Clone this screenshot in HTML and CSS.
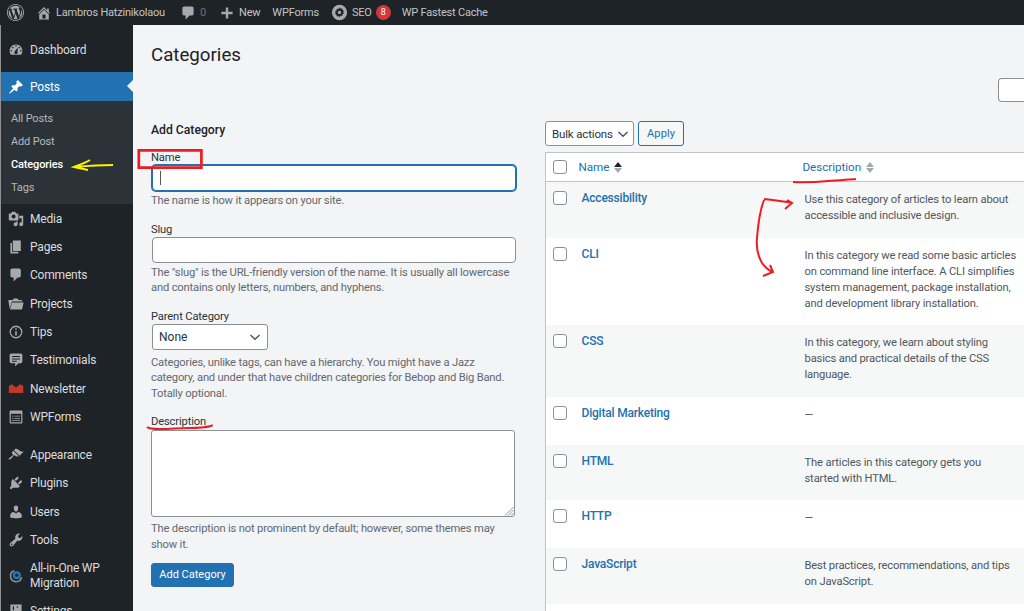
FILE: index.html
```html
<!DOCTYPE html>
<html lang="en">
<head>
    <meta charset="UTF-8">
    <meta name="viewport" content="width=device-width, initial-scale=1.0">
    <title>Categories</title>
    <link rel="stylesheet" href="styles.css">
</head>
<body>
    <div class="adminbar">
        <svg class="bar-logo" viewBox="0 0 20 20"><path d="M20 10c0-5.52-4.48-10-10-10S0 4.48 0 10s4.48 10 10 10 10-4.48 10-10zM10 1.01c4.96 0 8.99 4.02 8.99 8.99s-4.03 8.99-8.99 8.99S1.01 14.96 1.01 10 5.04 1.01 10 1.01zM8.01 14.82L4.96 6.61c.49-.03 1.05-.08 1.05-.08.43-.05.38-1.01-.06-.99 0 0-1.29.1-2.13.1-.15 0-.33 0-.52-.01 1.44-2.17 3.9-3.6 6.7-3.6 2.09 0 3.99.79 5.41 2.09-.6-.08-1.45.35-1.45 1.42 0 .66.38 1.22.79 1.88.31.54.5 1.22.5 2.21 0 1.34-1.27 4.48-1.27 4.48l-2.71-7.5c.48-.03.75-.16.75-.16.43-.05.38-1.1-.05-1.08 0 0-1.3.11-2.14.11-.78 0-2.11-.11-2.11-.11-.43-.02-.48 1.06-.05 1.08l.84.08 1.12 3.04zm6.02 2.15L16.64 10s.67-1.69.39-3.81c.63 1.14.94 2.42.94 3.81 0 2.96-1.56 5.58-3.94 6.97zM2.68 6.77L6.5 17.25c-2.67-1.3-4.47-4.08-4.47-7.25 0-1.16.2-2.23.65-3.23zm7.45 4.53l2.29 6.25c-.75.27-1.57.42-2.42.42-.72 0-1.41-.11-2.06-.3z"/></svg>
        <svg class="bar-icon bar-home" viewBox="0 0 20 20"><path d="M16 8.5l1.53 1.53-1.06 1.06L10 4.62l-6.47 6.47-1.06-1.06L10 2.5l4 4v-2h2v4zm-6-2.46l6 5.99V18H4v-5.97zM12 17v-5H8v5h4z"/></svg>
        <span class="bar-text bar-site">Lambros Hatzinikolaou</span>
        <svg class="bar-icon bar-comment" viewBox="0 0 20 20"><path d="M5 2h10c1.1 0 2 .9 2 2v7c0 1.1-.9 2-2 2h-3l-5 5v-5H5c-1.1 0-2-.9-2-2V4c0-1.1.9-2 2-2z"/></svg>
        <span class="bar-text bar-count">0</span>
        <svg class="bar-icon bar-plus" viewBox="0 0 20 20"><path d="M17 8.500v3h-5.500V17h-3v-5.500H3v-3h5.500V3h3v5.500z"/></svg>
        <span class="bar-text bar-new">New</span>
        <span class="bar-text bar-forms">WPForms</span>
        <svg class="bar-seo" viewBox="0 0 20 20"><path fill-rule="evenodd" d="M10 1a9 9 0 1 0 0 18 9 9 0 0 0 0-18zm0 3l1.200 1.500 1.900-.4.4 1.900 1.700.9-.8 1.700.8 1.700-1.700.9-.4 1.900-1.900-.4L10 15.700l-1.200-1.500-1.900.4-.4-1.900-1.700-.9.8-1.700-.8-1.700 1.700-.9.4-1.900 1.900.4z"/><circle cx="10" cy="9.900" r="2"/></svg>
        <span class="bar-text bar-seotext">SEO</span>
        <span class="bar-badge">8</span>
        <span class="bar-text bar-cache">WP Fastest Cache</span>
    </div>

    <div class="wrap">
        <nav class="sidebar">
            <a class="menu-item menu-first"><svg viewBox="0 0 20 20"><path d="M3.76 16h12.48c1.1-1.37 1.76-3.11 1.76-5 0-4.42-3.58-8-8-8s-8 3.58-8 8c0 1.89.66 3.63 1.76 5zM10 4c.55 0 1 .45 1 1s-.45 1-1 1-1-.45-1-1 .45-1 1-1zM6 6c.55 0 1 .45 1 1s-.45 1-1 1-1-.45-1-1 .45-1 1-1zm8 0c.55 0 1 .45 1 1s-.45 1-1 1-1-.45-1-1 .45-1 1-1zm-5.370 5.550L12 7v6c0 1.100-.9 2-2 2s-2-.9-2-2c0-.57.24-1.080.63-1.450zM4 10c.55 0 1 .45 1 1s-.45 1-1 1-1-.45-1-1 .45-1 1-1zm12 0c.55 0 1 .45 1 1s-.45 1-1 1-1-.45-1-1 .45-1 1-1z"/></svg>Dashboard</a>
            <a class="menu-item menu-current"><svg viewBox="0 0 20 20"><path d="M10.440 3.020l1.820-1.820 6.360 6.350-1.830 1.820c-1.050-.68-2.480-.57-3.410.36l-.75.75c-.92.93-1.040 2.350-.35 3.410l-1.830 1.820-2.410-2.410-2.800 2.790c-.42.42-3.380 2.710-3.800 2.290s1.860-3.390 2.280-3.810l2.790-2.790L4.100 9.360l1.830-1.820c1.050.69 2.480.57 3.400-.36l.75-.75c.93-.92 1.050-2.350.36-3.410z"/></svg>Posts</a>
            <div class="submenu">
                <a>All Posts</a>
                <a>Add Post</a>
                <a class="sub-current">Categories</a>
                <a>Tags</a>
            </div>
            <a class="menu-item"><svg viewBox="0 0 20 20"><path d="M13 11V4c0-.55-.45-1-1-1h-1.670L9 1H5L3.670 3H2c-.55 0-1 .45-1 1v7c0 .55.45 1 1 1h10c.55 0 1-.45 1-1zM7 4.500c1.380 0 2.500 1.120 2.500 2.500S8.380 9.500 7 9.500 4.500 8.380 4.500 7 5.620 4.500 7 4.500zM14 6h5v10.500c0 1.380-1.120 2.500-2.500 2.500S14 17.880 14 16.500s1.120-2.500 2.500-2.500c.17 0 .34.02.5.05V9h-3V6zm-4 8.050V13h2v3.500c0 1.380-1.120 2.500-2.500 2.500S7 17.880 7 16.500 8.120 14 9.500 14c.17 0 .34.02.5.05z"/></svg>Media</a>
            <a class="menu-item"><svg viewBox="0 0 20 20"><path d="M6 15V2h10v13H6zm-1 1h8v2H3V5h2v11z"/></svg>Pages</a>
            <a class="menu-item"><svg viewBox="0 0 20 20"><path d="M5 2h9c1.100 0 2 .9 2 2v7c0 1.100-.9 2-2 2h-2l-5 5v-5H5c-1.100 0-2-.9-2-2V4c0-1.100.9-2 2-2z"/></svg>Comments</a>
            <a class="menu-item"><svg viewBox="0 0 20 20"><path d="M1 5h5l1-2h5l1 2h4l1 2H5L2 16 .5 6c0-.6.2-1 .5-1zm4 3h14.500L17.500 17H2.500z"/></svg>Projects</a>
            <a class="menu-item"><svg viewBox="0 0 20 20"><path fill-rule="evenodd" d="M10 2a8 8 0 1 1 0 16 8 8 0 0 1 0-16zm0 1.600a6.400 6.400 0 1 0 0 12.800 6.400 6.400 0 0 0 0-12.800zM9 5.500h2v2H9zm0 3.500h2v5.500H9z"/></svg>Tips</a>
            <a class="menu-item"><svg viewBox="0 0 20 20"><path fill-rule="evenodd" d="M4 2h12c1.100 0 2 .9 2 2v8c0 1.100-.9 2-2 2h-3l-4 4v-4H4c-1.100 0-2-.9-2-2V4c0-1.100.9-2 2-2zm1 3v1.300h10V5zm0 3v1.300h10V8zm0 3v1.300h6V11z"/></svg>Testimonials</a>
            <a class="menu-item"><svg viewBox="0 0 20 20"><path class="icon-red" d="M1 6l4-2 5 4 5-4 4 2v9H1z"/></svg>Newsletter</a>
            <a class="menu-item menu-sep"><svg viewBox="0 0 20 20"><path fill-rule="evenodd" d="M3 2h14c.6 0 1 .4 1 1v14c0 .6-.4 1-1 1H3c-.6 0-1-.4-1-1V3c0-.6.4-1 1-1zm.5 4v10.500h13V6zM5 8.500h2v1H5zm3 0h7v1H8zm-3 3h2v1H5zm3 0h7v1H8zm-3 2.500h10v1H5z"/></svg>WPForms</a>
            <a class="menu-item"><svg viewBox="0 0 20 20"><path d="M14.480 11.060L7.410 3.990l1.500-1.500c.5-.56 2.300-.47 3.510.32 1.210.8 1.430 1.280 2.910 2.100 1.180.64 2.450 1.260 4.450.85zm-.71.71L6.700 4.700 4.930 6.470c-.39.39-.39 1.020 0 1.410l1.060 1.060c.39.39.39 1.030 0 1.420-.6.6-1.430 1.110-2.210 1.690-.35.26-.7.53-1.010.84C1.430 13.230.49 15 1.060 15.570c.57.57 2.340-.37 3.690-1.720.31-.31.58-.66.84-1.010.58-.78 1.090-1.610 1.690-2.210.39-.39 1.030-.39 1.420 0l1.060 1.060c.39.39 1.020.39 1.410 0z"/></svg>Appearance</a>
            <a class="menu-item"><svg viewBox="0 0 20 20"><path d="M13.110 4.360L9.870 7.600 8 5.730l3.240-3.240c.35-.34 1.050-.2 1.560.32.52.51.66 1.210.31 1.550zm-8 1.770l.91-1.120 9.010 9.010-1.190.84c-.71.71-2.630 1.160-3.820 1.160H6.140L4.900 17.260c-.59.59-1.540.59-2.120 0-.59-.58-.59-1.530 0-2.120l1.240-1.240v-3.880c0-1.130.4-3.190 1.090-3.890zm7.260 3.970l3.240-3.240c.34-.35 1.040-.21 1.550.31.52.51.66 1.210.31 1.550l-3.240 3.250z"/></svg>Plugins</a>
            <a class="menu-item"><svg viewBox="0 0 20 20"><path d="M10 9.250c-2.270 0-2.730-3.440-2.730-3.440C7 4.020 7.820 2 9.970 2c2.160 0 2.980 2.020 2.710 3.810 0 0-.41 3.440-2.680 3.440zm0 2.570L12.720 10c2.390 0 4.520 2.330 4.520 4.530v2.490s-3.650 1.130-7.240 1.130c-3.650 0-7.240-1.130-7.240-1.130v-2.490c0-2.250 1.940-4.480 4.470-4.480z"/></svg>Users</a>
            <a class="menu-item"><svg viewBox="0 0 20 20"><path d="M16.680 9.770c-1.340 1.340-3.300 1.670-4.950.99l-5.410 6.520c-.99.99-2.590.99-3.580 0s-.99-2.590 0-3.570l6.520-5.420c-.68-1.650-.35-3.610.99-4.950 1.280-1.280 3.120-1.620 4.720-1.060l-2.890 2.890 2.820 2.820 2.860-2.870c.53 1.580.18 3.390-1.080 4.650zM3.810 16.210c.4.39 1.040.39 1.430 0 .4-.4.4-1.040 0-1.430-.39-.4-1.030-.4-1.430 0-.39.39-.39 1.030 0 1.430z"/></svg>Tools</a>
            <a class="menu-item menu-tall"><svg viewBox="0 0 20 20"><path fill="none" stroke="#8c8f94" stroke-width="2" d="M8 3.500a7 7 0 1 0 9 8"/><circle class="icon-blue" cx="11" cy="9" r="5"/><circle cx="11" cy="9" r="2" fill="#1d2327"/></svg>All-in-One WP Migration</a>
            <a class="menu-item"><svg viewBox="0 0 20 20"><path d="M3 2h14v16H3zm3 2v5h1.500V4zm5 0v2h1.500V4z"/></svg>Settings</a>
        </nav>

        <main class="content">
            <h1>Categories</h1>
            <div class="search-row"><div class="search-box"></div></div>
            <div class="columns">
                <form class="col-form">
                    <h2>Add Category</h2>
                    <label>Name</label>
                    <div class="input input-focus"><span class="caret"></span></div>
                    <p class="help help-name">The name is how it appears on your site.</p>
                    <label>Slug</label>
                    <div class="input"></div>
                    <p class="help help-slug">The "slug" is the URL-friendly version of the name. It is usually all lowercase and contains only letters, numbers, and hyphens.</p>
                    <label>Parent Category</label>
                    <div class="select select-parent">None<svg viewBox="0 0 12 8"><path d="M1.500 2 6 6.200 10.500 2"/></svg></div>
                    <p class="help help-parent">Categories, unlike tags, can have a hierarchy. You might have a Jazz category, and under that have children categories for Bebop and Big Band. Totally optional.</p>
                    <label>Description</label>
                    <div class="textarea"><svg viewBox="0 0 10 10"><path d="M9.500 1 1 9.500M9.500 4 4 9.500M9.500 7 7 9.500"/></svg></div>
                    <p class="help help-desc">The description is not prominent by default; however, some themes may show it.</p>
                    <button type="button" class="btn-primary">Add Category</button>
                </form>

                <div class="col-table">
                    <div class="tablenav">
                        <div class="select select-bulk">Bulk actions<svg viewBox="0 0 12 8"><path d="M1.500 2 6 6.200 10.500 2"/></svg></div>
                        <button type="button" class="btn-apply">Apply</button>
                    </div>
                    <table>
                        <thead>
                            <tr>
                                <th class="check"><span class="box"></span></th>
                                <th class="th-name">Name<span class="sort"><i class="up dark"></i><i class="down"></i></span></th>
                                <th class="th-desc">Description<span class="sort"><i class="up"></i><i class="down"></i></span></th>
                            </tr>
                        </thead>
                        <tbody>
                            <tr class="alt">
                                <td class="check"><span class="box"></span></td>
                                <td class="name">Accessibility</td>
                                <td class="desc">Use this category of articles to learn about accessible and inclusive design.</td>
                            </tr>
                            <tr>
                                <td class="check"><span class="box"></span></td>
                                <td class="name">CLI</td>
                                <td class="desc">In this category we read some basic articles on command line interface. A CLI simplifies system management, package installation, and development library installation.</td>
                            </tr>
                            <tr class="alt">
                                <td class="check"><span class="box"></span></td>
                                <td class="name">CSS</td>
                                <td class="desc">In this category, we learn about styling basics and practical details of the CSS language.</td>
                            </tr>
                            <tr>
                                <td class="check"><span class="box"></span></td>
                                <td class="name">Digital Marketing</td>
                                <td class="desc">—</td>
                            </tr>
                            <tr class="alt">
                                <td class="check"><span class="box"></span></td>
                                <td class="name">HTML</td>
                                <td class="desc">The articles in this category gets you started with HTML.</td>
                            </tr>
                            <tr>
                                <td class="check"><span class="box"></span></td>
                                <td class="name">HTTP</td>
                                <td class="desc">—</td>
                            </tr>
                            <tr class="alt">
                                <td class="check"><span class="box"></span></td>
                                <td class="name">JavaScript</td>
                                <td class="desc">Best practices, recommendations, and tips on JavaScript.</td>
                            </tr>
                            <tr>
                                <td></td>
                                <td></td>
                                <td></td>
                            </tr>
                        </tbody>
                    </table>
                </div>
            </div>
        </main>
    </div>

    <!-- hand drawn markup on top of the screenshot -->
    <svg class="marks" viewBox="0 0 1024 611">
        <path class="mark-box" d="M138.800 150.400h62.600v17.200h-62.600z"/>
        <path class="mark-yellow" d="M74 167c12-1 26-2 39-2M90 160c-5 3-11 5-16 7 5 1 10 2 14 3"/>
        <path class="mark-red" d="M147 427c2 2 8 2 13 2 10 0 20-1 30-1 8 0 17-1 21-2 1 0 1-1 1-1.500"/>
        <path class="mark-red" d="M793 182c12 .5 24 0 35-1 10-.5 20-1.500 28-2"/>
        <path class="mark-red" d="M764 200c-4 10-6 25-7 38-1 10 1 18 5 25 3 4 6 7 11 9M764 199c9 1 19 2 28 4M787 200l5 3-7 6M770 265l3 7-10 4"/>
    </svg>
</body>
</html>
```

FILE: styles.css
```css
* {
    box-sizing: border-box;
    margin: 0;
    padding: 0;
}

html, body {
    height: 611px;
    overflow: hidden;
}

body {
    position: relative;
    background: #f2f4f6;
    color: #3c434a;
    font-family: Roboto, "Noto Sans", sans-serif;
    font-size: 12px;
    line-height: 16px;
}

/* top bar */
.adminbar {
    display: flex;
    align-items: center;
    height: 25px;
    background: #1d2327;
    color: #c3c4c7;
}

.adminbar svg {
    fill: #a7aaad;
    flex: none;
}

.bar-logo { width: 17px; height: 17px; margin-left: 7px; }
.bar-icon { width: 16px; height: 16px; }
.bar-home { margin-left: 12px; }
.bar-site { margin-left: 4px; }
.bar-comment { margin-left: 15px; }
.bar-count { margin-left: 4px; color: #6b6f74; }
.bar-plus { margin-left: 13px; }
.bar-new { margin-left: 4px; }
.bar-forms { margin-left: 12px; }
.bar-seo { width: 17px; height: 17px; margin-left: 12px; }
.bar-seotext { margin-left: 4px; }
.bar-text { white-space: nowrap; font-size: 11px; letter-spacing: -.2px; }
.bar-cache { margin-left: 11px; }

.bar-badge {
    width: 15px;
    height: 15px;
    margin-left: 4px;
    border-radius: 50%;
    background: #d63638;
    color: #fff;
    font-size: 9px;
    line-height: 15px;
    text-align: center;
}

.wrap {
    display: flex;
    height: 586px;
}

/* left menu */
.sidebar {
    flex: none;
    width: 133px;
    padding-top: 10px;
    background: #1d2327;
    border-left: 1px solid #8f9194;
    overflow: hidden;
}

.menu-item {
    display: flex;
    align-items: center;
    height: 28.300px;
    padding: 2px 0 0 7px;
    color: #dcdcde;
    font-size: 12px;
    letter-spacing: -.2px;
}

.menu-item svg {
    flex: none;
    width: 16px;
    height: 16px;
    margin-right: 6px;
    fill: #a7aaad;
}

.menu-first { margin-bottom: 9px; }
.menu-sep { margin-bottom: 10px; }
.menu-tall { height: 43px; line-height: 15px; }

.icon-red { fill: #c0392b; }
.menu-item .icon-blue { fill: #1e7ab8; }

.menu-current {
    position: relative;
    background: #2271b1;
    color: #fff;
}

.menu-current svg { fill: #fff; }

.menu-current::after {
    content: '';
    position: absolute;
    right: 0;
    top: 8px;
    border: 6px solid transparent;
    border-right-color: #f2f4f6;
    border-left-width: 0;
}

.submenu {
    display: flex;
    flex-direction: column;
    height: 103px;
    padding: 7px 0 0 10px;
    background: #2c3338;
    color: #b4b9be;
    font-size: 11px;
    letter-spacing: -.15px;
}

.submenu a { height: 23.300px; line-height: 22px; }
.sub-current { color: #fff; font-weight: 500; }

/* main area */
.content {
    flex: 1;
    min-width: 0;
    padding: 0 0 0 18px;
    overflow: hidden;
}

h1 {
    height: 32px;
    margin-top: 14px;
    color: #1d2327;
    font-size: 18.700px;
    font-weight: 400;
    line-height: 32px;
}

.search-row {
    display: flex;
    justify-content: flex-end;
    height: 24px;
    margin-top: 7px;
}

.search-box {
    width: 26px;
    height: 24px;
    background: #fff;
    border: 1px solid #8c8f94;
    border-right: 0;
    border-radius: 4px 0 0 4px;
}

.columns {
    display: flex;
}

.col-form {
    flex: none;
    width: 365px;
    padding-top: 20px;
}

h2 {
    color: #1d2327;
    font-size: 12.200px;
    font-weight: 500;
    line-height: 16px;
    margin-bottom: 12px;
}

label {
    display: block;
    padding-top: 1px;
    color: #2c3338;
    font-size: 11.200px;
    letter-spacing: -.15px;
    line-height: 14px;
}

.input {
    height: 26px;
    margin-left: 1px;
    background: #fff;
    border: 1px solid #8c8f94;
    border-radius: 4px;
}

.input-focus {
    border-color: #2271b1;
    box-shadow: 0 0 0 1px #2271b1;
    padding: 5px 7px;
}

.caret {
    display: block;
    width: 1px;
    height: 14px;
    background: #555;
}

.help {
    color: #646970;
    font-size: 11.200px;
    letter-spacing: -.18px;
    line-height: 15.500px;
}

.help-name { margin: 2px 0 13px; }
.help-slug { margin: 2px 0 13px; }
.help-parent { margin: 5px 0 13px; }
.help-desc { margin: 4px 0 10px; }

.select {
    display: flex;
    align-items: center;
    justify-content: space-between;
    background: #fff;
    border: 1px solid #8c8f94;
    border-radius: 3px;
    color: #2c3338;
    font-size: 12px;
    white-space: nowrap;
}

.select svg {
    width: 12px;
    height: 8px;
    fill: none;
    stroke: #50575e;
    stroke-width: 1.500;
}

.select-parent {
    width: 116px;
    height: 26px;
    margin-left: 1px;
    padding: 0 6px;
}

.textarea {
    position: relative;
    width: 364px;
    height: 87px;
    margin-top: 1px;
    background: #fff;
    border: 1px solid #8c8f94;
    border-radius: 3px;
}

.textarea svg {
    position: absolute;
    right: 0;
    bottom: 0;
    width: 10px;
    height: 10px;
    fill: none;
    stroke: #8c8f94;
}

.btn-primary {
    display: block;
    width: 83px;
    height: 24px;
    margin-top: 11px;
    background: #2271b1;
    border: 1px solid #2271b1;
    border-radius: 3px;
    color: #fff;
    font: inherit;
    font-size: 11px;
}

.col-table {
    flex: none;
    width: 490px;
    margin-left: 29px;
    margin-top: 19px;
}

.tablenav {
    display: flex;
    gap: 4px;
    height: 31px;
}

.select-bulk {
    width: 89px;
    height: 25px;
    padding: 0 4px 0 6px;
    font-size: 11.500px;
    letter-spacing: -.15px;
}

.btn-apply {
    width: 46px;
    height: 25px;
    background: #f6f7f7;
    border: 1px solid #2271b1;
    border-radius: 3px;
    color: #2271b1;
    font: inherit;
    font-size: 11.200px;
}

table {
    width: 100%;
    table-layout: fixed;
    border-collapse: collapse;
    background: #fff;
    border: 1px solid #c3c4c7;
    border-right: 0;
}

th {
    height: 29px;
    border-bottom: 1px solid #c3c4c7;
    color: #2271b1;
    font-weight: 400;
    font-size: 11.700px;
    letter-spacing: -.05px;
    text-align: left;
    vertical-align: middle;
}

.check { width: 33px; padding-left: 7px; }
.th-name { width: 224px; }

.box {
    display: block;
    width: 14px;
    height: 14px;
    background: #fff;
    border: 1px solid #8c8f94;
    border-radius: 3px;
}

.sort {
    display: inline-flex;
    flex-direction: column;
    gap: 1px;
    margin-left: 5px;
    vertical-align: middle;
}

.sort i {
    display: block;
    border: 4px solid transparent;
    border-top-width: 0;
    border-bottom-width: 5px;
    border-bottom-color: #a7aaad;
}

.sort i.down {
    border-bottom-width: 0;
    border-top-width: 5px;
    border-top-color: #a7aaad;
}

.sort i.dark { border-bottom-color: #1d2327; }

td {
    vertical-align: top;
    height: 48px;
}

td.check { padding-top: 9px; }

td.name {
    padding: 8px 0 0 3px;
    color: #2271b1;
    font-weight: 500;
    font-size: 12px;
    letter-spacing: -.2px;
}

td.desc {
    padding: 10px 17px 13.500px 2px;
    color: #50575e;
    font-size: 11.200px;
    letter-spacing: -.15px;
    line-height: 16px;
}

.alt { background: #f6f7f7; }

/* annotations */
.marks {
    position: absolute;
    left: 0;
    top: 0;
    width: 1024px;
    height: 611px;
    fill: none;
    pointer-events: none;
}

.mark-box {
    stroke: #ed1c24;
    stroke-width: 2.700;
}

.mark-yellow {
    stroke: #fff200;
    stroke-width: 2;
}

.mark-red {
    stroke: #ed1c24;
    stroke-width: 2;
}
```
